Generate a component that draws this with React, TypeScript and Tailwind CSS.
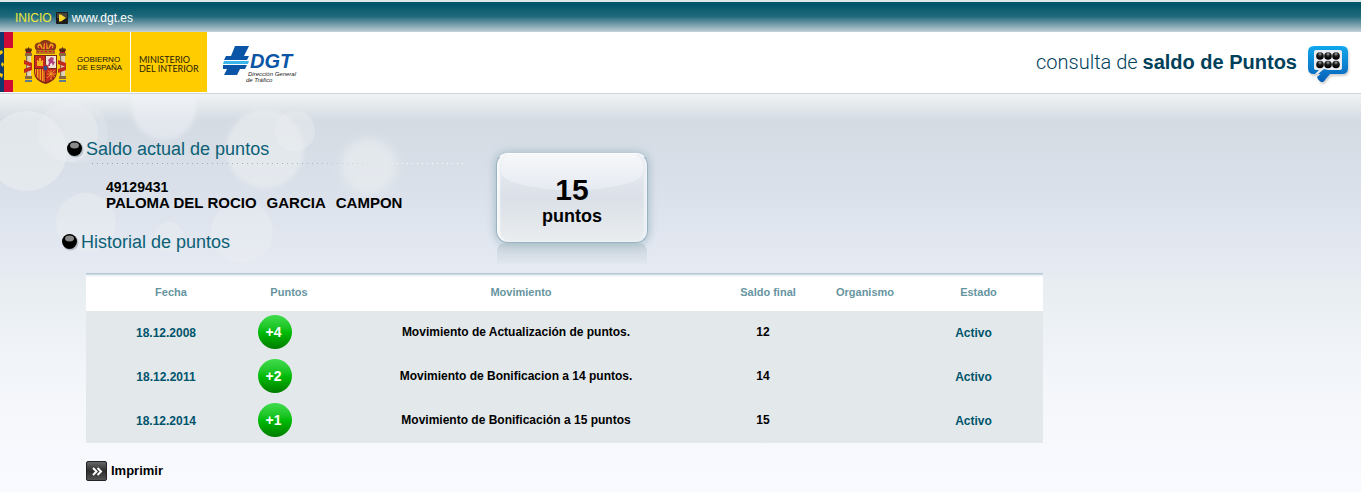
import React from 'react';

const SANS = "font-['Liberation_Sans',Arial,sans-serif]";

type Movement = { date: string; points: string; text: string; balance: number; state: string };

const movements: Movement[] = [
  { date: '18.12.2008', points: '+4', text: 'Movimiento de Actualización de puntos.', balance: 12, state: 'Activo' },
  { date: '18.12.2011', points: '+2', text: 'Movimiento de Bonificacion a 14 puntos.', balance: 14, state: 'Activo' },
  { date: '18.12.2014', points: '+1', text: 'Movimiento de Bonificación a 15 puntos', balance: 15, state: 'Activo' },
];

function PlayIcon() {
  return (
    <svg width="12" height="12" viewBox="0 0 12 12" aria-hidden="true">
      <rect width="12" height="12" rx="1" fill="#1c1c1c" />
      <rect x="1" y="1" width="10" height="5" fill="#44443c" />
      <path d="M3 2.500h2L10 6 5 9.500H3z" fill="#f5d62a" />
    </svg>
  );
}

function Flag() {
  return (
    <svg width="13" height="60" viewBox="0 0 13 60" aria-hidden="true">
      <rect width="13" height="60" fill="#fc0" />
      <rect x="4" width="9" height="16" fill="#cc0a35" />
      <rect x="4" y="48" width="9" height="12" fill="#cc0a35" />
      <rect width="4" height="60" fill="#0f3a70" />
      <path d="M0 19l2-1 1 3-3 2zM2 30l2 2-1 3-2-2zM0 41l3 1-1 4-2-2z" fill="#fc0" />
    </svg>
  );
}

function Column({ x }: { x: number }) {
  return (
    <g transform={`translate(${x} 0)`}>
      <path d="M1 14h5v-3H1z" fill="#c8102e" />
      <path d="M0 11l1-2 1 1 1.500-2 1.500 2 1-1 1 2-1 2H1z" fill="#5c2a10" />
      <path d="M0 14h7v3H0z" fill="#8a6a3c" />
      <rect x="1" y="17" width="5" height="21" fill="#ddd2b8" />
      <rect x="1" y="17" width="1.200" height="21" fill="#7d7055" />
      <path d="M-1 21l8 3v4l-8-3zM-1 30l8-3v4l-8 3z" fill="#c22a1c" />
      <rect y="37" width="7" height="3" fill="#8a6a3c" />
      <path d="M0 41h7v2H0z" fill="#5d7c90" />
    </g>
  );
}

function Crest() {
  return (
    <svg width="43" height="46" viewBox="0 0 43 46" aria-hidden="true">
      <Column x={1} />
      <Column x={35} />
      <path d="M12 11C9 6 12 3 16 3.500c1-2 4-2.500 5.500-2.500S26 1.500 27 3.500c4-.5 7 2.500 4 7.500l-1 4H13z" fill="#8d3a14" />
      <path d="M14 9c-2-3 1-5 3-4l2 5zM29 9c2-3-1-5-3-4l-2 5zM20 4h3l1 6h-5z" fill="#e7a51d" />
      <path d="M15 7l2 3M28 7l-2 3M21.500 4v6" stroke="#c8102e" strokeWidth="1.500" />
      <path d="M12 11h19v4H12z" fill="#b9741b" />
      <path d="M13 12.500h17" stroke="#c8102e" strokeDasharray="2 2" />
      <path d="M10 16h23v16c0 8-5 11-11.500 13C15 43 10 40 10 32z" fill="#7c2a17" />
      <path d="M11 17h10v12H11z" fill="#c9281f" />
      <path d="M22 17h10v12H22z" fill="#efe3d6" />
      <path d="M13 27v-6h1v1h1v-3h2v3h1v-1h1v6z" fill="#f3b11c" />
      <path d="M24 27l1-4-1-2 3-3 3 1-1 3 2 1-2 4-1-3-2 1v2z" fill="#b0407c" />
      <path d="M11 30h10v13c-6-2-10-5-10-11z" fill="#f5b81c" />
      <path d="M12.500 30v8M15 30v11M17.500 30v12M20 30v13" stroke="#c9281f" strokeWidth="1.200" />
      <path d="M22 30h10v2c0 6-4 9-10 11z" fill="#c9281f" />
      <path d="M23 31l8 7M31 31l-8 8M23 35h9M27 31v10" stroke="#f0ae25" strokeWidth=".8" />
      <ellipse cx="21.500" cy="29" rx="3" ry="3.500" fill="#c9281f" />
      <ellipse cx="21.500" cy="29" rx="2" ry="2.500" fill="#2c4f93" />
    </svg>
  );
}

function DgtLogo() {
  return (
    <svg width="76" height="40" viewBox="0 0 76 40" role="img" aria-label="DGT">
      <path d="M12 2h14l-5 10h5l-2 4H1l2-4h5z" fill="#0a55a5" />
      <path d="M1 17h25l-1 3H0z" fill="#38b6ec" />
      <path d="M0 21h24l-2 4h-5l-3 6H1l3-6H0z" fill="#0a55a5" />
      <text x="27" y="24" fontFamily="Liberation Sans, Arial, sans-serif" fontSize="20" fontWeight="700" fontStyle="italic" fill="#0a55a5">DGT</text>
      <text x="25" y="32" fontFamily="Liberation Sans, Arial, sans-serif" fontSize="6" fontStyle="italic" fill="#222">Dirección General</text>
      <text x="23" y="38" fontFamily="Liberation Sans, Arial, sans-serif" fontSize="6" fontStyle="italic" fill="#222">de Tráfico</text>
    </svg>
  );
}

function PointsIcon() {
  const dots = [0, 1, 2].flatMap((c) => [0, 1].map((r) => ({ x: 12 + c * 8, y: 10 + r * 8.5 })));
  return (
    <svg width="44" height="40" viewBox="0 0 44 40" aria-hidden="true" className="mt-2 drop-shadow-[1px_2px_1px_rgba(0,0,0,0.2)]">
      <defs>
        <linearGradient id="bubble" gradientUnits="userSpaceOnUse" x1="0" y1="0" x2="0" y2="36">
          <stop offset="0" stopColor="#0fa8ec" />
          <stop offset="1" stopColor="#0860b8" />
        </linearGradient>
        <radialGradient id="dot" cx=".5" cy=".25" r=".6">
          <stop offset="0" stopColor="#aaa" />
          <stop offset=".45" stopColor="#222" />
          <stop offset="1" stopColor="#000" />
        </radialGradient>
      </defs>
      <path d="M6 0h28q6 0 6 6v16q0 6-6 6H22l-6 7q-2 2-4 0l-2-2q-1-2 1-3l2-2H6q-6 0-6-6V6q0-6 6-6z" fill="url(#bubble)" />
      <path d="M8 4h24q2 0 2 2v16q0 2-2 2H20l-4-1-6 5-3 0 4-4H8q-2 0-2-2V6q0-2 2-2z" fill="#e9edf2" />
      <path d="M9 31l9-7h5l-7 11q-2 2-4 0l-2-2z" fill="url(#bubble)" />
      {dots.map((d) => <circle key={`${d.x}-${d.y}`} cx={d.x} cy={d.y} r="3.800" fill="url(#dot)" />)}
    </svg>
  );
}

function Bubbles() {
  return (
    <svg width="480" height="190" viewBox="0 0 480 190" aria-hidden="true" className="absolute top-0 left-0">
      <defs>
        <linearGradient id="fade" x1="0" y1="0" x2="0" y2="1">
          <stop offset="0" stopColor="#f5f7f8" />
          <stop offset="1" stopColor="#e4e9f1" />
        </linearGradient>
        <filter id="soft" x="-30%" y="-30%" width="160%" height="160%"><feGaussianBlur stdDeviation="2" /></filter>
        <filter id="softer" x="-30%" y="-30%" width="160%" height="160%"><feGaussianBlur stdDeviation="5" /></filter>
      </defs>
      <g fill="#edf1f3">
        <circle cx="27" cy="57" r="40" opacity=".55" />
        <circle cx="68" cy="38" r="30" opacity=".4" />
        <circle cx="77" cy="38" r="31" opacity=".25" />
        <circle cx="265" cy="55" r="39" opacity=".55" filter="url(#soft)" />
        <circle cx="295" cy="37" r="20" opacity=".4" />
        <circle cx="369" cy="72" r="28" opacity=".55" filter="url(#softer)" />
        <circle cx="86" cy="129" r="30" opacity=".4" />
        <circle cx="169" cy="143" r="15" opacity=".3" />
        <circle cx="242" cy="138" r="31" opacity=".4" />
      </g>
      <circle cx="164" cy="14" r="32" fill="url(#fade)" opacity=".75" filter="url(#soft)" />
    </svg>
  );
}

function Bullet() {
  return (
    <svg width="18" height="18" viewBox="0 0 18 18" aria-hidden="true">
      <circle cx="8.500" cy="9.500" r="8" fill="#9aa3ac" opacity=".6" />
      <circle cx="7.500" cy="8.500" r="7.500" fill="#000" />
      <ellipse cx="7.500" cy="5.500" rx="4.500" ry="3" fill="#8a8a8a" />
    </svg>
  );
}

function Heading({ children }: { children: React.ReactNode }) {
  return (
    <h2 className="flex items-center gap-px text-[18px] leading-[22px] text-[#0b6076]">
      <Bullet />
      {children}
    </h2>
  );
}

function DottedRule() {
  return (
    <svg width="375" height="1" viewBox="0 0 375 1" aria-hidden="true" className="mt-[3px] ml-[25px] block">
      <defs>
        <linearGradient id="rule" gradientUnits="userSpaceOnUse" x1="0" y1="0" x2="375" y2="0">
          <stop offset="0" stopColor="#8aa9b8" />
          <stop offset=".6" stopColor="#a3bac7" />
          <stop offset=".85" stopColor="#fff" />
        </linearGradient>
      </defs>
      <path d="M0 .5h375" stroke="url(#rule)" strokeDasharray="1 4" />
    </svg>
  );
}

function ScoreCard() {
  return (
    <div className="w-[152px]">
      <div className="relative rounded-xl border border-[#9bb3c0] border-t-white bg-linear-to-b from-[#eaedf3] via-[#dbe0e8] to-[#e9edef] pt-5 pb-4 text-center font-bold text-black shadow-[0_0_8px_1px_#a3bdc8,inset_3px_0_2px_#f8fafc,inset_-3px_0_2px_#eef2f7]">
        <div className="absolute inset-x-1 top-0 h-9 rounded-t-xl rounded-b-[50%] bg-linear-to-b from-[#f6f8fa] to-[#e6eaf1]" />
        <p className="relative text-[30px] leading-8">15</p>
        <p className="relative text-[18px] leading-5">puntos</p>
      </div>
      <div className="mx-px h-[22px] rounded-t-lg bg-linear-to-b from-[#c5d0d7] to-transparent" />
    </div>
  );
}

function PrintIcon() {
  return (
    <svg width="21" height="20" viewBox="0 0 21 20" aria-hidden="true">
      <defs>
        <linearGradient id="print" x1="0" y1="0" x2="0" y2="1">
          <stop offset="0" stopColor="#6a6a6a" />
          <stop offset=".5" stopColor="#2c2c2c" />
          <stop offset="1" stopColor="#555" />
        </linearGradient>
      </defs>
      <rect x=".5" y=".5" width="20" height="19" rx="1.500" fill="url(#print)" stroke="#222" />
      <path d="M7 7l3.500 3.500L7 14M11.500 7l3.500 3.500-3.500 3.500" fill="none" stroke="#fff" strokeWidth="2" />
    </svg>
  );
}

export default function App() {
  return (
    <div className={`flex min-h-screen flex-col bg-white ${SANS}`}>
      <nav className="flex h-[31px] items-center gap-1 border-t-2 border-[#dfe6ea] bg-linear-to-b from-[#005468] from-10% via-[#1f6b7d] via-50% to-[#b4c8d0] pt-0.5 pl-[15px] text-[12px] leading-4">
        <a href="#inicio" className="text-[#f0ea3c]">INICIO</a>
        <PlayIcon />
        <a href="#dgt" className="text-white">www.dgt.es</a>
      </nav>

      <header className="flex items-center justify-between border-t border-b border-t-[#c3d0da] border-b-[#ccd4dc] bg-white pb-px">
        <div className="flex h-[60px] items-center">
          <Flag />
          <div className="flex h-full items-center gap-2.5 bg-[#fc0] pl-[11px] text-[8px] leading-[8px] text-[#111]">
            <Crest />
            <p className="w-[53px] pt-1 font-medium">GOBIERNO<br />DE ESPAÑA</p>
          </div>
          <p className="ml-px flex h-full w-[76px] items-center bg-[#fc0] pt-1 pl-2 font-['Lato',sans-serif] text-[9px] leading-[9px] whitespace-nowrap text-[#2a2200]">MINISTERIO<br />DEL INTERIOR</p>
          <div className="ml-4 pt-1"><DgtLogo /></div>
        </div>
        <div className="flex items-center gap-[11px] pr-[9px]">
          <h1 className="text-[20px] leading-6 text-[#00405a]">
            <span className="font-['Roboto','Liberation_Sans',sans-serif] font-light">consulta de </span>
            <b>saldo de Puntos</b>
          </h1>
          <PointsIcon />
        </div>
      </header>

      <main className="relative flex-1 bg-[linear-gradient(to_bottom,#f0f3f5_0px,#d4dbe3_27px,#dae0e9_90px,#e5eaf3_176px,#e7edf0_190px,#eff3f7_250px,#f5f7fb_310px,#f9faff_398px)] pt-11 pb-[10px]">
        <Bubbles />
        <div className="relative">
          <div className="flex items-start">
            <section className="w-[496px] pl-[62px]">
              <div className="pl-[5px]">
                <Heading>Saldo actual de puntos</Heading>
                <DottedRule />
              </div>
              <div className="mt-[15px] ml-11 font-bold text-black">
                <p className="text-[14px] leading-4">49129431</p>
                <p className="flex gap-[10px] text-[15px] leading-4">
                  <span>PALOMA DEL ROCIO</span>
                  <span>GARCIA</span>
                  <span>CAMPON</span>
                </p>
              </div>
              <div className="mt-5">
                <Heading>Historial de puntos</Heading>
              </div>
            </section>
            <div className="pt-[15px]"><ScoreCard /></div>
          </div>

          <div className="mt-2 pr-4 pl-[86px]">
            <table className="w-full max-w-[957px] table-fixed border-collapse text-center text-[12px] font-bold">
              <colgroup>
                <col className="w-[160px]" />
                <col className="w-[76px]" />
                <col className="w-[388px]" />
                <col className="w-[106px]" />
                <col className="w-[88px]" />
                <col className="w-[139px]" />
              </colgroup>
              <thead className="bg-[linear-gradient(to_bottom,#b5c6d4_0px,#b5c6d4_1px,#e3eef3_2px,#ffffff_4px)] text-[11px] text-[#67959f]">
                <tr className="h-[38px]">
                  {['Fecha', 'Puntos', 'Movimiento', 'Saldo final', 'Organismo', 'Estado'].map((h) => (
                    <th key={h} scope="col" className="pl-[10px] whitespace-nowrap">{h}</th>
                  ))}
                </tr>
              </thead>
              <tbody className="bg-[#e3e8eb] text-black">
                {movements.map((m) => (
                  <tr key={m.date} className="h-11">
                    <td className="text-[#00546b]">{m.date}</td>
                    <td className="pr-[18px] pb-0.5">
                      <span className="mx-auto flex size-[34px] items-center justify-center rounded-full bg-linear-to-b from-[#3fdc4c] via-[#00bd06] to-[#007d00] pr-[3px] text-[14px] text-white">{m.points}</span>
                    </td>
                    <td className="pb-0.5">{m.text}</td>
                    <td className="pb-0.5">{m.balance}</td>
                    <td />
                    <td className="text-[#00546b]">{m.state}</td>
                  </tr>
                ))}
              </tbody>
            </table>
            <button type="button" className="mt-[18px] flex items-center gap-1 text-[13px] leading-5 font-bold text-black">
              <PrintIcon />
              Imprimir
            </button>
          </div>
        </div>
      </main>
    </div>
  );
}
